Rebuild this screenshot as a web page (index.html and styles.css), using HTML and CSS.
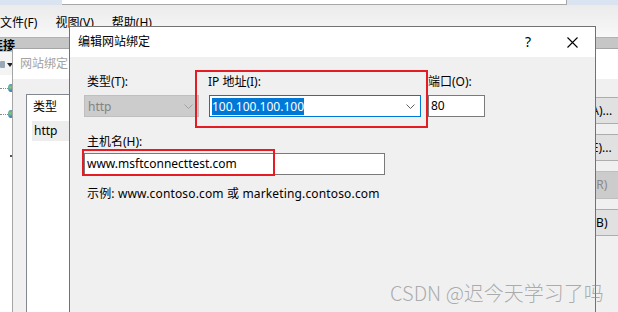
FILE: index.html
```html
<!DOCTYPE html>
<html lang="zh-CN">
<head>
<meta charset="utf-8">
<title>编辑网站绑定</title>
<link rel="stylesheet" href="styles.css">
</head>
<body>
<div class="main">
  <div class="topstrip"><div class="addr"></div></div>
  <div class="menubar"><span>文件(F)</span><span>视图(V)</span><span>帮助(H)</span></div>
  <div class="panelhead"><span>连接</span></div>
  <div class="toolbar"><span class="tbicon"></span><span class="tbarrow"></span></div>
  <div class="tree">
    <div class="trow r1"><span class="dots"></span><span class="globe"></span></div>
    <div class="trow r2"><span class="dots"></span><span class="globe"></span></div>
    <div class="trow r3"><span class="dot"></span></div>
  </div>
</div>

<div class="bindings">
  <div class="btitle">网站绑定</div>
  <div class="bbody">
    <div class="listbox">
      <div class="lhead">类型</div>
      <div class="lrow">http</div>
    </div>
    <div class="btncol">
      <div class="btn">添加(A)...</div>
      <div class="btn">编辑(E)...</div>
      <div class="btn disabled">删除(R)</div>
      <div class="btn">浏览(B)</div>
    </div>
  </div>
</div>

<div class="dialog">
  <div class="dtitle">
    <span class="dtext">编辑网站绑定</span>
    <span class="help">?</span>
    <svg class="close" width="11" height="11" viewBox="0 0 11 11"><path d="M0.5 0.5 L10.5 10.5 M10.5 0.5 L0.5 10.5" stroke="#000" stroke-width="1.1" fill="none"/></svg>
  </div>
  <div class="dbody">
    <div class="fields">
      <div class="field f-type">
        <label class="lbl indent">类型(T):</label>
        <div class="sel disabled"><span>http</span><svg class="chev" width="9" height="5" viewBox="0 0 9 5"><path d="M0.5 0.5 L4.5 4.5 L8.5 0.5" stroke="#a2a2a2" fill="none"/></svg></div>
      </div>
      <div class="field f-ip">
        <label class="lbl">IP 地址(I):</label>
        <div class="sel combo"><span class="selected">100.100.100.100</span><svg class="chev" width="9" height="5" viewBox="0 0 9 5"><path d="M0.5 0.5 L4.5 4.5 L8.5 0.5" stroke="#606060" fill="none"/></svg></div>
      </div>
      <div class="field f-port">
        <label class="lbl">端口(O):</label>
        <div class="textbox">80</div>
      </div>
    </div>
    <label class="lbl indent host-lbl">主机名(H):</label>
    <div class="textbox host">www.msftconnecttest.com</div>
    <div class="example">示例: www.contoso.com 或 marketing.contoso.com</div>
  </div>
  <div class="redbox rb-ip"></div>
  <div class="redbox rb-host"></div>
</div>

<div class="watermark">CSDN @迟今天学习了吗</div>
</body>
</html>
```
FILE: styles.css
```css
* { box-sizing: border-box; }
html, body { margin: 0; padding: 0; }
body {
  width: 618px;
  height: 312px;
  overflow: hidden;
  position: relative;
  background: #fff;
  font-family: "Noto Sans", "Noto Sans CJK SC", sans-serif;
  font-size: 12px;
  color: #000;
}

/* background main window */
.main { display: flex; flex-direction: column; height: 312px; }
.topstrip { height: 5px; background: #d9e4f0; padding: 0 51px 0 62px; }
.addr { height: 5px; background: #fff; border-bottom: 1px solid #a7a7a7; border-right: 1px solid #a7a7a7; }
.menubar {
  height: 32px;
  background: linear-gradient(#ebebeb, #f8f8f8);
  display: flex;
  gap: 18px;
  padding-top: 10px;
  line-height: 16px;
  white-space: nowrap;
}
.panelhead {
  height: 15px;
  background: #c6c6c6;
  border-top: 1px solid #b2b2b2;
  line-height: 15px;
  font-weight: bold;
  white-space: nowrap;
}
.panelhead span { margin-left: -9px; }
.toolbar { height: 23px; background: #f4f4f4; display: flex; align-items: center; padding-top: 2px; }
.tbicon { width: 5px; height: 7px; background: #9aa7b4; border-radius: 1px; }
.tbarrow { margin-left: 2px; width: 0; height: 0; border-left: 3px solid transparent; border-right: 3px solid transparent; border-top: 4px solid #222; }
.tree { flex: 1; background: #fff; display: flex; flex-direction: column; padding-top: 8px; }
.trow { display: flex; align-items: center; height: 10px; }
.trow.r2 { margin-top: 16px; }
.trow.r3 { margin-top: 32px; }
.dots { width: 8px; border-top: 1px dotted #8a8a8a; }
.globe { width: 6px; height: 8px; border-radius: 50%; background: radial-gradient(circle at 40% 40%, #8fd06a, #2f7fc9 70%); }
.dot { margin-left: 10px; width: 2px; height: 2px; background: #555; }

/* site bindings window (behind) */
.bindings {
  position: absolute;
  left: 12px;
  top: 48px;
  width: 660px;
  height: 280px;
  border: 1px solid #a5a5a5;
  display: flex;
  flex-direction: column;
}
.btitle {
  height: 31px;
  background: #fff;
  color: #a3a3a3;
  padding-left: 7px;
  line-height: 30px;
}
.bbody { flex: 1; background: #f0f0f0; display: flex; padding: 15px 0 0 13px; }
.listbox { width: 500px; height: 240px; background: #fff; border: 1px solid #828790; }
.lhead { height: 26px; line-height: 24px; padding-left: 6px; }
.lrow { margin-left: 5px; height: 20px; line-height: 20px; padding-left: 2px; background: #ededed; }
.btncol { margin-left: 9px; padding-top: 3px; display: flex; flex-direction: column; gap: 10px; }
.btn {
  width: 106px;
  height: 27px;
  background: #e1e1e1;
  border: 1px solid #adadad;
  text-align: center;
  line-height: 25px;
  white-space: nowrap;
}
.btn.disabled { background: #cccccc; border-color: #bfbfbf; color: #8a8a8a; height: 28px; }

/* edit binding dialog (front) */
.dialog {
  position: absolute;
  left: 69px;
  top: 26px;
  width: 527px;
  height: 286px;
  border: 1px solid #727272;
  border-bottom: 0;
  display: flex;
  flex-direction: column;
}
.dtitle {
  height: 30px;
  background: #fff;
  display: flex;
  align-items: center;
  padding-left: 8px;
}
.dtext { line-height: 16px; }
.help { margin-left: auto; font-size: 14px; line-height: 16px; margin-top: -1px; }
.close { margin-left: 36px; margin-right: 17px; }
.dbody { flex: 1; background: #f0f0f0; padding: 17px 0 0 14px; }
.fields { display: flex; }
.field { display: flex; flex-direction: column; }
.f-type { width: 115px; margin-right: 10px; }
.f-ip { width: 212px; margin-right: 7px; }
.f-port { width: 57px; }
.lbl { display: block; line-height: 16px; margin-bottom: 5px; white-space: nowrap; }
.indent { padding-left: 3px; }
.f-ip .lbl { margin-left: -1px; }
.sel {
  height: 22px;
  display: flex;
  align-items: center;
  justify-content: space-between;
  white-space: nowrap;
}
.sel.disabled { background: #cccccc; border: 1px solid #bfbfbf; color: #838383; padding: 0 5px 0 3px; }
.sel.combo { background: #fff; border: 1px solid #0078d7; padding: 0 5px 0 2px; }
.selected { background: #0078d7; color: #fff; line-height: 17px; }
.textbox {
  height: 22px;
  background: #fff;
  border: 1px solid #7a7a7a;
  padding-left: 2px;
  line-height: 20px;
  white-space: nowrap;
}
.host-lbl { margin-top: 17px; margin-bottom: 3px; }
.host { width: 301px; }
.example { margin-top: 11px; padding-left: 3px; line-height: 16px; white-space: nowrap; letter-spacing: 0.15px; }

.redbox { position: absolute; border: 2px solid #e51c23; }
.rb-ip { left: 125px; top: 43px; width: 233px; height: 58px; }
.rb-host { left: 12px; top: 122px; width: 193px; height: 27px; }

.watermark {
  position: absolute;
  left: 390px;
  top: 281px;
  font-family: "Noto Sans CJK SC", sans-serif;
  font-size: 20px;
  font-weight: 300;
  line-height: 24px;
  color: rgba(140, 140, 140, 0.7);
  white-space: nowrap;
}
```
